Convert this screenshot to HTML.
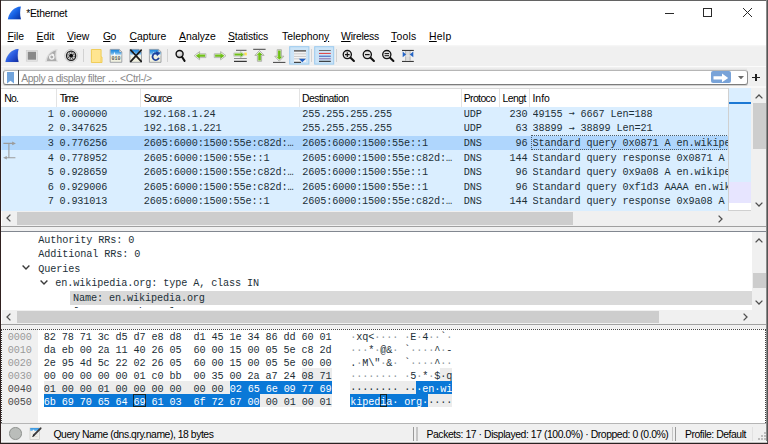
<!DOCTYPE html>
<html><head><meta charset="utf-8"><title>*Ethernet</title>
<style>
html,body{margin:0;padding:0;}
body{width:768px;height:444px;overflow:hidden;background:#fff;position:relative;font-family:"Liberation Sans",sans-serif;font-size:10px;color:#000;}
div,span,svg{position:absolute;white-space:pre;}
.ui{font-family:"Liberation Sans",sans-serif;font-size:10px;color:#000;line-height:14px;}
.ui u{text-decoration:underline;text-decoration-thickness:1px;text-underline-offset:1px;}
.mono{font-family:"Liberation Mono","DejaVu Sans Mono",monospace;font-size:10.2px;letter-spacing:-0.12px;line-height:14.5px;color:#1c3038;}
.row{left:0;width:726px;height:14.5px;}
.row.dn span{top:2.1px;}
.row span{top:1.1px;height:14.5px;overflow:hidden;}
.ar{font-family:"DejaVu Sans Mono",monospace;font-weight:normal;font-size:10px;letter-spacing:0;display:inline-block;position:static;width:6px;text-align:center;line-height:10px;vertical-align:0.5px;margin-right:-0.12px;}
.hsep{top:0;width:1px;height:18px;background:#e3e3e3;}
.brow{left:0;height:13px;line-height:13px;width:765px;}
.brow span{top:1.9px;line-height:13px;}
.brow i{font-style:normal;color:#8e9aa0;position:static;}
.brow div{top:0;height:13px;}
</style></head><body>

<div id="title" style="left:0;top:0;width:768px;height:26px;background:#fff;">
<svg style="left:7px;top:5px" width="16" height="16" viewBox="0 0 16 16"><defs><linearGradient id="fin" x1="0.1" y1="0.1" x2="0.95" y2="0.9"><stop offset="0" stop-color="#4f93f6"/><stop offset="0.5" stop-color="#1763e6"/><stop offset="1" stop-color="#0a37a8"/></linearGradient></defs><path d="M0.9 14.3 C1.6 9.5 5 3.6 11.3 1.7 L13.9 1.5 C13 5.5 12.7 10 14 14.3 Z" fill="url(#fin)"/><path d="M0.9 14.3 H14" stroke="#7fa6e8" stroke-width="0.5" opacity="0.7"/></svg>
<span class="ui" style="left:26.20px;top:7.30px;font-size:10.4px;letter-spacing:-0.270px;color:#000;">*Ethernet</span>
<div style="left:664.7px;top:12.7px;width:9.2px;height:1px;background:#2a2a2a;"></div>
<div style="left:703.2px;top:8.2px;width:9.2px;height:9.2px;border:1px solid #2a2a2a;box-sizing:border-box;"></div>
<svg style="left:742.2px;top:7.4px" width="11" height="11" viewBox="0 0 11 11"><path d="M1 1 L10 10 M10 1 L1 10" stroke="#2a2a2a" stroke-width="1" fill="none"/></svg>
</div>
<div id="menu" style="left:0;top:26px;width:768px;height:20px;background:#fff;">
<span class="ui" style="left:7.50px;top:3.60px;font-size:10.4px;letter-spacing:-0.102px;color:#000;"><u>F</u>ile</span>
<span class="ui" style="left:36.50px;top:3.60px;font-size:10.4px;letter-spacing:0.010px;color:#000;"><u>E</u>dit</span>
<span class="ui" style="left:67.10px;top:3.60px;font-size:10.4px;letter-spacing:-0.051px;color:#000;"><u>V</u>iew</span>
<span class="ui" style="left:103.10px;top:3.60px;font-size:10.4px;letter-spacing:-0.673px;color:#000;"><u>G</u>o</span>
<span class="ui" style="left:129.50px;top:3.60px;font-size:10.4px;letter-spacing:-0.049px;color:#000;"><u>C</u>apture</span>
<span class="ui" style="left:179.10px;top:3.60px;font-size:10.4px;letter-spacing:-0.066px;color:#000;"><u>A</u>nalyze</span>
<span class="ui" style="left:228.00px;top:3.60px;font-size:10.4px;letter-spacing:-0.157px;color:#000;"><u>S</u>tatistics</span>
<span class="ui" style="left:282.00px;top:3.60px;font-size:10.4px;letter-spacing:-0.026px;color:#000;">Telephon<u>y</u></span>
<span class="ui" style="left:341.10px;top:3.60px;font-size:10.4px;letter-spacing:-0.238px;color:#000;"><u>W</u>ireless</span>
<span class="ui" style="left:391.00px;top:3.60px;font-size:10.4px;letter-spacing:0.231px;color:#000;"><u>T</u>ools</span>
<span class="ui" style="left:429.00px;top:3.60px;font-size:10.4px;letter-spacing:0.271px;color:#000;"><u>H</u>elp</span>
</div>
<div id="tb" style="left:1px;top:45.4px;width:766px;height:20.6px;background:linear-gradient(#f8f8f8,#f0f0f0 2px);"></div>
<svg style="left:0;top:44px" width="430" height="24" viewBox="0 44 430 24"><defs><linearGradient id="finb" x1="0.1" y1="0.1" x2="0.95" y2="0.9"><stop offset="0" stop-color="#5a8ff2"/><stop offset="0.5" stop-color="#2a5be0"/><stop offset="1" stop-color="#1633a8"/></linearGradient><linearGradient id="sky" x1="0" y1="0" x2="0" y2="1"><stop offset="0" stop-color="#1c84dc"/><stop offset="0.55" stop-color="#56a9e8"/><stop offset="1" stop-color="#e8f3fb"/></linearGradient><linearGradient id="grn" x1="0" y1="0" x2="0" y2="1"><stop offset="0" stop-color="#8fd630"/><stop offset="1" stop-color="#4fa800"/></linearGradient><linearGradient id="grnh" x1="0" y1="0" x2="1" y2="0"><stop offset="0" stop-color="#8fd630"/><stop offset="1" stop-color="#4fa800"/></linearGradient><radialGradient id="glass" cx="0.4" cy="0.35" r="0.7"><stop offset="0" stop-color="#f4f4f4"/><stop offset="1" stop-color="#b8b8b8"/></radialGradient></defs><g transform="translate(4.6,47.6)"><path d="M0.5 14.6 C1.2 9.3 4.8 3.2 11.2 1.3 L14.3 1.1 C13.4 5.5 13.1 10 14.5 14.6 Z" fill="#d4d8e2"/><path d="M0.9 14.3 C1.6 9.5 5 3.6 11.3 1.7 L13.9 1.5 C13 5.5 12.7 10 14 14.3 Z" fill="url(#finb)"/></g><rect x="26.3" y="50.4" width="11" height="10.8" fill="#e4e4e4" stroke="#cfcfcf" stroke-width="0.7"/><rect x="27.8" y="51.8" width="8.2" height="7.9" fill="#898989"/><path d="M45.2 62 C46 55.5 50 50.2 57.7 49.1 C55.9 53 56.1 57.8 58 62 Z" fill="#dedede"/><path d="M46.9 60.9 C47.7 56 50.6 51.8 56 50.6 C54.8 54 55 57.6 56.5 60.9 Z" fill="#ababab"/><circle cx="51.8" cy="57" r="2.1" fill="none" stroke="#f4f4f4" stroke-width="1.3"/><path d="M51.6 53.2 L54.4 54.6 L52 56.2 Z" fill="#f4f4f4"/><circle cx="71.1" cy="55.7" r="6.4" fill="#e9e9e9" stroke="#c2c2c2" stroke-width="0.8"/><circle cx="71.1" cy="55.7" r="4.6" fill="#dcdcdc" stroke="#1c1c1c" stroke-width="1.25"/><circle cx="71.1" cy="55.7" r="3.1" fill="none" stroke="#4a4a4a" stroke-width="1.2" stroke-dasharray="1.3 1.1"/><circle cx="71.1" cy="55.7" r="2" fill="#0c0c0c"/><rect x="83.0" y="49" width="1" height="13" fill="#d2d2d2"/><rect x="167.0" y="49" width="1" height="13" fill="#d2d2d2"/><rect x="311.0" y="49" width="1" height="13" fill="#d2d2d2"/><rect x="336.0" y="49" width="1" height="13" fill="#d2d2d2"/><path d="M91.4 49.5 H101.1 V57 H102 V62.5 H91.4 Z" fill="#ffe590" stroke="#eec94e" stroke-width="0.9"/><path d="M100.7 57.3 V62" stroke="#f2cf5c" stroke-width="0.6" fill="none"/><path d="M110.2 49.4 H119.4 L121.8 51.9 V62.3 H110.2 Z" fill="#f1f1e0" stroke="#8d9198" stroke-width="0.8"/><path d="M110.6 49.8 H119.2 L121.4 52.1 V55.6 H110.6 Z" fill="url(#sky)"/><path d="M112.6 55.6 L113.8 54.6 L114.5 51.4 L115.2 54.6 L116.6 55.6 Z" fill="#fbfdff"/><path d="M119.4 49.6 V51.9 H121.8 Z" fill="#fdfdfd" stroke="#8d9198" stroke-width="0.5"/><path d="M129.9 49.4 H139.1 L141.5 51.9 V62.3 H129.9 Z" fill="#f1f1e0" stroke="#8d9198" stroke-width="0.8"/><path d="M130.3 49.8 H138.9 L141.1 52.1 V55.6 H130.3 Z" fill="url(#sky)"/><path d="M132.3 55.6 L133.5 54.6 L134.2 51.4 L134.9 54.6 L136.3 55.6 Z" fill="#fbfdff"/><path d="M139.1 49.6 V51.9 H141.5 Z" fill="#fdfdfd" stroke="#8d9198" stroke-width="0.5"/><path d="M149.4 49.4 H158.6 L161.0 51.9 V62.3 H149.4 Z" fill="#f1f1e0" stroke="#8d9198" stroke-width="0.8"/><path d="M149.8 49.8 H158.4 L160.6 52.1 V55.6 H149.8 Z" fill="url(#sky)"/><path d="M151.8 55.6 L153.0 54.6 L153.7 51.4 L154.4 54.6 L155.8 55.6 Z" fill="#fbfdff"/><path d="M158.6 49.6 V51.9 H161.0 Z" fill="#fdfdfd" stroke="#8d9198" stroke-width="0.5"/><text x="111.5" y="60.4" font-family="Liberation Mono, monospace" font-size="4.8" font-weight="bold" fill="#5a5a5a" textLength="9" lengthAdjust="spacingAndGlyphs">010</text><path d="M130.8 50.1 L141.2 61.4 M141.2 50.1 L130.8 61.4" stroke="#1a1a1a" stroke-width="1.7" stroke-linecap="round" fill="none"/><path d="M157.9 54.2 A3.3 3.3 0 1 0 158.9 57.8" fill="none" stroke="#1d3f98" stroke-width="1.8"/><path d="M155.9 51.2 L160.2 53 L157 56.2 Z" fill="#1d3f98"/><circle cx="179.6" cy="54" r="3.5" fill="url(#glass)" stroke="#111" stroke-width="1.4"/><path d="M182 56.9 L184.6 60.9" stroke="#111" stroke-width="2" stroke-linecap="round" fill="none"/><path d="M194.2 55.7 L199.6 51.6 V53.8 H205.9 V57.6 H199.6 V59.8 Z" fill="#f3f4f1" stroke="#aeb2a8" stroke-width="0.9"/><path d="M195.8 55.7 L199.7 52.9 V54.6 H205.1 V56.8 H199.7 V58.5 Z" fill="url(#grn)"/><path d="M226 55.7 L220.6 51.6 V53.8 H214.3 V57.6 H220.6 V59.8 Z" fill="#f3f4f1" stroke="#aeb2a8" stroke-width="0.9"/><path d="M224.4 55.7 L220.5 52.9 V54.6 H215.1 V56.8 H220.5 V58.5 Z" fill="url(#grn)"/><rect x="236" y="49.8" width="10.5" height="1" fill="#555"/><rect x="244.2" y="52.6" width="2.6" height="2.8" fill="#ffe14d"/><path d="M244.8 54.6 L240.4 51.3 V53 H233.8 V56.2 H240.4 V57.9 Z" fill="#f3f4f1" stroke="#b4b8b0" stroke-width="0.7"/><path d="M243.8 54.6 L240.7 52.2 V53.6 H234.5 V55.6 H240.7 V57 Z" fill="url(#grn)"/><rect x="234" y="58" width="12.8" height="1" fill="#8a8a8a"/><rect x="234" y="60.8" width="12.8" height="1.1" fill="#222"/><rect x="253.2" y="48.8" width="12.4" height="1" fill="#444"/><path d="M259.5 50.5 L264.1 55.4 H261.6 V61.3 H257.4 V55.4 H254.9 Z" fill="#f3f4f1" stroke="#a8aca2" stroke-width="0.9"/><path d="M259.5 51.9 L262.4 54.9 H260.8 V60.5 H258.2 V54.9 H256.6 Z" fill="url(#grnh)"/><path d="M279.3 61.2 L283.9 56.2 H281.4 V49.7 H277.2 V56.2 H274.7 Z" fill="#f3f4f1" stroke="#a8aca2" stroke-width="0.9"/><path d="M279.3 59.8 L282.2 56.7 H280.6 V50.5 H278 V56.7 H276.4 Z" fill="url(#grnh)"/><rect x="273" y="61.9" width="12.4" height="1" fill="#444"/><rect x="289.7" y="46.7" width="19.2" height="17.4" fill="#cce4f7" stroke="#9bcaef" stroke-width="1"/><rect x="294" y="50" width="12" height="12" fill="#f4f4f4"/><rect x="294" y="50" width="12" height="1.7" fill="#6c6c6c"/><rect x="294" y="53.4" width="12" height="0.9" fill="#c4c4c4"/><rect x="294" y="55.9" width="12" height="0.9" fill="#c4c4c4"/><rect x="294" y="58.4" width="12" height="0.9" fill="#c4c4c4"/><path d="M298.8 58.8 H305.9 L302.3 62.2 Z" fill="#1f5fc4"/><rect x="294" y="61.8" width="7" height="1.1" fill="#333"/><rect x="314.7" y="46.7" width="19" height="17.4" fill="#cce4f7" stroke="#9bcaef" stroke-width="1"/><rect x="319" y="50.0" width="11.8" height="1" fill="#6c6c6c"/><rect x="319" y="52.9" width="11.8" height="1" fill="#e23a3a"/><rect x="319" y="55.7" width="11.8" height="1" fill="#3456b4"/><rect x="319" y="58.3" width="11.8" height="1" fill="#8a6aa8"/><rect x="319" y="60.8" width="11.8" height="1" fill="#1c1c1c"/><circle cx="347.3" cy="54.6" r="4.1" fill="#e2e2e2" stroke="#111" stroke-width="1.3"/><path d="M350.6 57.8 L353.9 61" stroke="#111" stroke-width="2.1" stroke-linecap="round" fill="none"/><path d="M345.0 54.6 H349.6 M347.3 52.3 V56.9" stroke="#111" stroke-width="1.1" fill="none"/><circle cx="367.3" cy="54.6" r="4.1" fill="#e2e2e2" stroke="#111" stroke-width="1.3"/><path d="M370.6 57.8 L373.9 61" stroke="#111" stroke-width="2.1" stroke-linecap="round" fill="none"/><path d="M365.0 54.6 H369.6" stroke="#111" stroke-width="1.2" fill="none"/><circle cx="386.8" cy="54.6" r="4.1" fill="#e2e2e2" stroke="#111" stroke-width="1.3"/><path d="M390.1 57.8 L393.4 61" stroke="#111" stroke-width="2.1" stroke-linecap="round" fill="none"/><path d="M384.6 53.6 H389.0 M384.6 55.7 H389.0" stroke="#111" stroke-width="1" fill="none"/><rect x="402" y="49.9" width="11.8" height="1.1" fill="#3a3a3a"/><rect x="402" y="60.9" width="11.8" height="1.1" fill="#3a3a3a"/><rect x="405.2" y="51" width="5.2" height="9.9" fill="#dcdcdc"/><rect x="405.2" y="51" width="0.9" height="9.9" fill="#b4b4b4"/><rect x="409.6" y="51" width="0.9" height="9.9" fill="#b4b4b4"/><rect x="402.6" y="55.6" width="10.6" height="0.7" fill="#efefef"/><path d="M402.7 51.5 L406.1 54.4 L402.7 57.3 Z" fill="#2565c6"/><path d="M413.3 51.5 L409.8 54.4 L413.3 57.3 Z" fill="#2565c6"/></svg>
<div style="left:1px;top:65.7px;width:766px;height:4px;background:#f0f0f0;"></div>
<div style="left:1px;top:65.7px;width:766px;height:1.6px;background:#fbfbfb;"></div>
<div style="left:4px;top:67.5px;width:743px;height:2.2px;background:linear-gradient(#f0f0f0,#dedede);"></div>
<div id="fb" style="left:1px;top:67px;width:766px;height:21px;">
<div style="left:0;top:2.5px;width:766px;height:18.5px;background:#f0f0f0;"></div>
<div style="left:2px;top:2.7px;width:745px;height:15.8px;box-sizing:border-box;border:1px solid #8e8e8e;border-top-color:#b6b6b6;border-bottom-color:#7c7c7c;border-radius:3px;background:#fff;box-shadow:0 1.2px 0 #d2d2d2;"></div>
<svg style="left:5.8px;top:4.6px" width="7" height="12" viewBox="0 0 7 12"><path d="M0 0 H7 V11.6 L3.5 8.8 L0 11.6 Z" fill="#72a4dc"/></svg>
<div style="left:17px;top:3px;width:1px;height:15px;background:#4a4a4a;"></div>
<span class="ui" style="left:20.20px;top:5.00px;font-size:10.4px;letter-spacing:-0.386px;color:#8a8a8a;">Apply a display filter … &lt;Ctrl-/&gt;</span>
<div style="left:709.5px;top:4.4px;width:20.3px;height:11.8px;background:#79a3d8;border-radius:2px;"></div>
<svg style="left:712px;top:5.5px" width="16" height="10" viewBox="0 0 16 10"><path d="M0.5 3.2 H9 V0.6 L15.2 4.9 L9 9.2 V6.6 H0.5 Z" fill="#fff"/></svg>
<svg style="left:737px;top:8.6px" width="6" height="3.4" viewBox="0 0 6 3.4"><path d="M0 0 H6 L3 3.4 Z" fill="#6a6a6a"/></svg>
<div style="left:751px;top:9.5px;width:7.6px;height:1.6px;background:#222;"></div><div style="left:754px;top:6.5px;width:1.6px;height:7.6px;background:#222;"></div>
</div>
<div style="left:1px;top:86.4px;width:766px;height:1.3px;background:#f8f8f8;"></div>
<div style="left:1px;top:87.7px;width:766px;height:1.3px;background:#d8d8d8;"></div>
<div id="hdr" style="left:2px;top:88.5px;width:726px;height:18px;background:#fff;">
<span class="ui" style="left:2.20px;top:3.50px;font-size:10.4px;letter-spacing:-0.792px;color:#000;">No.</span>
<span class="ui" style="left:57.80px;top:3.50px;font-size:10.4px;letter-spacing:-1.241px;color:#000;">Time</span>
<span class="ui" style="left:141.70px;top:3.50px;font-size:10.4px;letter-spacing:-0.890px;color:#000;">Source</span>
<span class="ui" style="left:300.00px;top:3.50px;font-size:10.4px;letter-spacing:-0.503px;color:#000;">Destination</span>
<span class="ui" style="left:461.70px;top:3.50px;font-size:10.4px;letter-spacing:-0.590px;color:#000;">Protoco</span>
<span class="ui" style="left:500.50px;top:3.50px;font-size:10.4px;letter-spacing:-0.506px;color:#000;">Lengt</span>
<span class="ui" style="left:530.50px;top:3.50px;font-size:10.4px;letter-spacing:-0.015px;color:#000;">Info</span>
<div class="hsep" style="left:54.0px"></div>
<div class="hsep" style="left:138.0px"></div>
<div class="hsep" style="left:297.0px"></div>
<div class="hsep" style="left:458.5px"></div>
<div class="hsep" style="left:497.0px"></div>
<div class="hsep" style="left:527.0px"></div>
</div>
<div id="plist" style="left:2px;top:106.5px;width:726px;height:104.5px;background:#daeeff;overflow:hidden;">
<div class="row mono" style="top:0.0px;background:#daeeff;">
<span style="left:0;width:51.7px;text-align:right;">1</span>
<span style="left:57.4px;width:80px;">0.000000</span>
<span style="left:141.7px;width:152px;">192.168.1.24</span>
<span style="left:300.2px;width:156px;">255.255.255.255</span>
<span style="left:461.8px;width:36px;">UDP</span>
<span style="left:480px;width:45.6px;text-align:right;">230</span>
<span style="left:530.6px;width:196px;">49155 <b class="ar">→</b> 6667 Len=188</span>
</div>
<div class="row mono" style="top:14.5px;background:#daeeff;">
<span style="left:0;width:51.7px;text-align:right;">2</span>
<span style="left:57.4px;width:80px;">0.347625</span>
<span style="left:141.7px;width:152px;">192.168.1.221</span>
<span style="left:300.2px;width:156px;">255.255.255.255</span>
<span style="left:461.8px;width:36px;">UDP</span>
<span style="left:480px;width:45.6px;text-align:right;">63</span>
<span style="left:530.6px;width:196px;">38899 <b class="ar">→</b> 38899 Len=21</span>
</div>
<div class="row mono" style="top:29.0px;background:#afd6fd;">
<span style="left:0;width:51.7px;text-align:right;">3</span>
<span style="left:57.4px;width:80px;">0.776256</span>
<span style="left:141.7px;width:152px;">2605:6000:1500:55e:c82d:…</span>
<span style="left:300.2px;width:156px;">2605:6000:1500:55e::1</span>
<span style="left:461.8px;width:36px;">DNS</span>
<span style="left:480px;width:45.6px;text-align:right;">96</span>
<span style="left:530.6px;width:196px;">Standard query 0x0871 A en.wikipedia.org</span>
</div>
<div class="row mono dn" style="top:43.5px;background:#daeeff;">
<span style="left:0;width:51.7px;text-align:right;">4</span>
<span style="left:57.4px;width:80px;">0.778952</span>
<span style="left:141.7px;width:152px;">2605:6000:1500:55e::1</span>
<span style="left:300.2px;width:156px;">2605:6000:1500:55e:c82d:…</span>
<span style="left:461.8px;width:36px;">DNS</span>
<span style="left:480px;width:45.6px;text-align:right;">144</span>
<span style="left:530.6px;width:196px;">Standard query response 0x0871 A en.wikipedia.org</span>
</div>
<div class="row mono" style="top:58.0px;background:#daeeff;">
<span style="left:0;width:51.7px;text-align:right;">5</span>
<span style="left:57.4px;width:80px;">0.928659</span>
<span style="left:141.7px;width:152px;">2605:6000:1500:55e:c82d:…</span>
<span style="left:300.2px;width:156px;">2605:6000:1500:55e::1</span>
<span style="left:461.8px;width:36px;">DNS</span>
<span style="left:480px;width:45.6px;text-align:right;">96</span>
<span style="left:530.6px;width:196px;">Standard query 0x9a08 A en.wikipedia.org</span>
</div>
<div class="row mono dn" style="top:72.5px;background:#daeeff;">
<span style="left:0;width:51.7px;text-align:right;">6</span>
<span style="left:57.4px;width:80px;">0.929006</span>
<span style="left:141.7px;width:152px;">2605:6000:1500:55e:c82d:…</span>
<span style="left:300.2px;width:156px;">2605:6000:1500:55e::1</span>
<span style="left:461.8px;width:36px;">DNS</span>
<span style="left:480px;width:45.6px;text-align:right;">96</span>
<span style="left:530.6px;width:196px;">Standard query 0xf1d3 AAAA en.wikipedia.org</span>
</div>
<div class="row mono" style="top:87.0px;background:#daeeff;">
<span style="left:0;width:51.7px;text-align:right;">7</span>
<span style="left:57.4px;width:80px;">0.931013</span>
<span style="left:141.7px;width:152px;">2605:6000:1500:55e::1</span>
<span style="left:300.2px;width:156px;">2605:6000:1500:55e:c82d:…</span>
<span style="left:461.8px;width:36px;">DNS</span>
<span style="left:480px;width:45.6px;text-align:right;">144</span>
<span style="left:530.6px;width:196px;">Standard query response 0x9a08 A en.wikipedia.org</span>
</div>
<div style="left:528.5px;top:28.8px;width:198px;height:14.4px;box-sizing:border-box;border:1px dotted #4c5c68;"></div>
<svg style="left:0;top:30px" width="18" height="26" viewBox="0 30 18 26"><path d="M1.4 36.4 H11 M6.9 36.4 V50.7 M4 50.7 H13.4" stroke="#9c9c9c" stroke-width="1.1" fill="none"/><path d="M10.2 34.6 L13.9 36.4 L10.2 38.2 Z" fill="#9c9c9c"/><path d="M4.8 48.9 L1.1 50.7 L4.8 52.5 Z" fill="#9c9c9c"/></svg>
</div>
<div style="left:1px;top:106.5px;width:1px;height:104.5px;background:#e4f2ff;"></div>
<div style="left:1px;top:135.5px;width:1px;height:14.5px;background:#c4e0fe;"></div>
<div style="left:728px;top:88px;width:1px;height:123px;background:#d0d0d0;"></div>
<div style="left:729px;top:88px;width:22px;height:123px;background:#daeeff;"></div>
<div style="left:729px;top:102px;width:22.5px;height:2px;background:#1c78d4;"></div>
<div style="left:729px;top:181.8px;width:22.5px;height:21.6px;background:#e7e5ff;"></div>
<div style="left:729px;top:203.4px;width:22.5px;height:7.6px;background:#fff;"></div>
<div style="left:728.5px;top:210.3px;width:23px;height:1px;background:#d0d0d0;"></div>
<div style="left:750.5px;top:88px;width:1px;height:123px;background:#d4d8dc;"></div>
<div style="left:751px;top:88px;width:16px;height:123px;background:#f0f0f0;"></div>
<div style="left:753px;top:103px;width:12.5px;height:46px;background:#cdcdcd;"></div>
<svg style="left:755px;top:94px" width="8" height="5" viewBox="0 0 8 5"><path d="M0.6 4.4 L4 1 L7.4 4.4" stroke="#505050" stroke-width="1.3" fill="none"/></svg>
<svg style="left:755px;top:202px" width="8" height="5" viewBox="0 0 8 5"><path d="M0.6 0.6 L4 4 L7.4 0.6" stroke="#505050" stroke-width="1.3" fill="none"/></svg>
<div style="left:2px;top:211px;width:765px;height:15px;background:#f0f0f0;"></div>
<div style="left:17px;top:212px;width:556px;height:13px;background:#cdcdcd;"></div>
<svg style="left:5.7px;top:214.2px" width="5" height="8" viewBox="0 0 5 8"><path d="M4.4 0.6 L1 4 L4.4 7.4" stroke="#505050" stroke-width="1.3" fill="none"/></svg>
<svg style="left:717.5px;top:214.5px" width="5" height="8" viewBox="0 0 5 8"><path d="M0.6 0.6 L4 4 L0.6 7.4" stroke="#505050" stroke-width="1.3" fill="none"/></svg>
<div style="left:1px;top:226px;width:766px;height:6px;background:#f0f0f0;"></div>
<div style="left:1px;top:226px;width:766px;height:1px;background:#a0a0a0;"></div>
<div style="left:1px;top:231px;width:766px;height:1px;background:#828790;"></div>
<div style="left:2px;top:300px;width:749.5px;height:10px;background:#fff;"></div><div id="det" style="left:2px;top:232px;width:749.5px;height:76.2px;background:#fff;overflow:hidden;">
<span class="mono" style="left:36.3px;top:1.7px;">Authority RRs: 0</span>
<span class="mono" style="left:36.3px;top:16.2px;">Additional RRs: 0</span>
<span class="mono" style="left:36.3px;top:30.7px;">Queries</span>
<span class="mono" style="left:53.3px;top:45.2px;">en.wikipedia.org: type A, class IN</span>
<div style="left:68.3px;top:58.6px;width:700px;height:14.3px;background:#d9d9d9;"></div>
<span class="mono" style="left:71.0px;top:59.7px;">Name: en.wikipedia.org</span>
<span class="mono" style="left:71.0px;top:74.2px;">[Name Length: 16]</span>
<svg style="left:20.4px;top:33.3px" width="8" height="5" viewBox="0 0 8 5"><path d="M0.6 0.6 L4 4 L7.4 0.6" stroke="#3a3a3a" stroke-width="1.4" fill="none"/></svg>
<svg style="left:38px;top:47.7px" width="8" height="5" viewBox="0 0 8 5"><path d="M0.6 0.6 L4 4 L7.4 0.6" stroke="#3a3a3a" stroke-width="1.4" fill="none"/></svg>
</div>
<div style="left:751.5px;top:232px;width:15.5px;height:78px;background:#f0f0f0;"></div>
<div style="left:753px;top:272.5px;width:12.5px;height:15px;background:#cdcdcd;"></div>
<svg style="left:755px;top:237.5px" width="8" height="5" viewBox="0 0 8 5"><path d="M0.6 4.4 L4 1 L7.4 4.4" stroke="#505050" stroke-width="1.3" fill="none"/></svg>
<svg style="left:755px;top:299.5px" width="8" height="5" viewBox="0 0 8 5"><path d="M0.6 0.6 L4 4 L7.4 0.6" stroke="#505050" stroke-width="1.3" fill="none"/></svg>
<div style="left:2px;top:309.6px;width:765px;height:14.4px;background:#f0f0f0;"></div>
<div style="left:17px;top:310.6px;width:642px;height:12.4px;background:#cdcdcd;"></div>
<svg style="left:5.7px;top:312.7px" width="5" height="8" viewBox="0 0 5 8"><path d="M4.4 0.6 L1 4 L4.4 7.4" stroke="#505050" stroke-width="1.3" fill="none"/></svg>
<svg style="left:742.5px;top:312.5px" width="5" height="8" viewBox="0 0 5 8"><path d="M0.6 0.6 L4 4 L0.6 7.4" stroke="#505050" stroke-width="1.3" fill="none"/></svg>
<div style="left:1px;top:324px;width:766px;height:5px;background:#f0f0f0;"></div>
<div style="left:1px;top:324px;width:766px;height:1px;background:#a0a0a0;"></div>
<div id="bytes" style="left:2px;top:329px;width:765px;height:94px;background:#fff;overflow:hidden;">
<div style="left:0;top:0;width:35.5px;height:94px;background:#f0f0f0;"></div>
<div class="brow mono" style="top:-0.3px;">
<span style="left:5.7px;color:#9a9a9a">0000</span>
<span style="left:41.7px;">82 78 71 3c d5 d7 e8 d8  d1 45 1e 34 86 dd 60 01</span>
<span style="left:348.2px;"><i>·</i>xq&lt;<i>·</i><i>·</i><i>·</i><i>·</i> <i>·</i>E<i>·</i>4<i>·</i><i>·</i>`<i>·</i></span>
</div>
<div class="brow mono" style="top:12.7px;">
<span style="left:5.7px;color:#9a9a9a">0010</span>
<span style="left:41.7px;">da eb 00 2a 11 40 26 05  60 00 15 00 05 5e c8 2d</span>
<span style="left:348.2px;"><i>·</i><i>·</i><i>·</i>*<i>·</i>@&amp;<i>·</i> `<i>·</i><i>·</i><i>·</i><i>·</i>^<i>·</i>-</span>
</div>
<div class="brow mono" style="top:25.7px;">
<span style="left:5.7px;color:#9a9a9a">0020</span>
<span style="left:41.7px;">2e 95 4d 5c 22 02 26 05  60 00 15 00 05 5e 00 00</span>
<span style="left:348.2px;">.<i>·</i>M\&quot;<i>·</i>&amp;<i>·</i> `<i>·</i><i>·</i><i>·</i><i>·</i>^<i>·</i><i>·</i></span>
</div>
<div class="brow mono" style="top:38.7px;">
<div style="left:299.7px;width:30px;background:#ececec;"></div>
<div style="left:438.2px;width:12px;background:#ececec;"></div>
<span style="left:5.7px;color:#9a9a9a">0030</span>
<span style="left:41.7px;">00 00 00 00 00 01 c0 bb  00 35 00 2a a7 24 08 71</span>
<span style="left:348.2px;"><i>·</i><i>·</i><i>·</i><i>·</i><i>·</i><i>·</i><i>·</i><i>·</i> <i>·</i>5<i>·</i>*<i>·</i>$</span><span style="left:438.2px;">·q</span>
</div>
<div class="brow mono" style="top:51.7px;">
<div style="left:41.7px;width:186px;background:#ececec;"></div>
<div style="left:227.7px;width:102px;background:#0a78d7;"></div>
<div style="left:348.2px;width:66px;background:#ececec;"></div>
<div style="left:414.2px;width:36px;background:#0a78d7;"></div>
<span style="left:5.7px;color:#4a4a4a">0040</span>
<span style="left:41.7px;">01 00 00 01 00 00 00 00  00 00 </span><span style="left:227.7px;color:#fff;">02 65 6e 09 77 69</span>
<span style="left:348.2px;">········ ··</span><span style="left:414.2px;color:#fff;">·en·wi</span>
</div>
<div class="brow mono" style="top:64.7px;">
<div style="left:41.7px;width:216px;background:#0a78d7;"></div>
<div style="left:257.7px;width:72px;background:#ececec;"></div>
<div style="left:348.2px;width:78px;background:#0a78d7;"></div>
<div style="left:426.2px;width:24px;background:#ececec;"></div>
<div style="left:131.2px;width:13px;box-sizing:border-box;border:1px solid #12272e;"></div>
<div style="left:377.7px;width:7px;box-sizing:border-box;border:1px solid #12272e;"></div>
<span style="left:5.7px;color:#4a4a4a">0050</span>
<span style="left:41.7px;color:#fff;">6b 69 70 65 64 69 61 03  6f 72 67 00</span><span style="left:257.7px;"> 00 01 00 01</span>
<span style="left:348.2px;color:#fff;">kipedia· org·</span><span style="left:426.2px;">····</span>
</div>
</div>
<div style="left:1.3px;top:329px;width:765px;height:94px;box-sizing:border-box;border:1px dotted #444;border-bottom:none;"></div>
<div id="sb" style="left:1px;top:423px;width:766px;height:20px;background:#f0f0f0;">
<div style="left:0;top:0;width:766px;height:1px;background:#b5b5b5;"></div>
<div style="left:8.2px;top:4.2px;width:12.6px;height:12.6px;box-sizing:border-box;border-radius:50%;background:#babdba;border:1px solid #8e918e;"></div>
<svg style="left:27px;top:3px" width="16" height="15" viewBox="28 426 16 15"><defs><linearGradient id="sky2" x1="0" y1="0" x2="0" y2="1"><stop offset="0" stop-color="#1f8ae0"/><stop offset="1" stop-color="#8ccaf2"/></linearGradient></defs><rect x="30" y="428" width="9.4" height="11.3" fill="#f1f1ea" stroke="#c4c4bc" stroke-width="0.6"/><rect x="30.2" y="428.1" width="9" height="2.9" fill="url(#sky2)"/><path d="M32.2 431 L33.6 429.6 L34.6 431 Z" fill="#f6fafd"/><path d="M32 434.2 H37.6 M32 436.6 H37.6" stroke="#cfcfc6" stroke-width="0.6"/><path d="M40.6 428.3 L33.9 435.2" stroke="#3c3c3c" stroke-width="1.9" stroke-linecap="round"/><path d="M33.9 435.2 L32.9 436.3" stroke="#222" stroke-width="1.2" stroke-linecap="round"/></svg>
<span class="ui" style="left:52.50px;top:4.50px;font-size:10.4px;letter-spacing:-0.458px;color:#000;">Query Name (dns.qry.name), 18 bytes</span>
<span class="ui" style="left:425.50px;top:4.50px;font-size:10.4px;letter-spacing:-0.425px;color:#000;">Packets: 17 · Displayed: 17 (100.0%) · Dropped: 0 (0.0%)</span>
<span class="ui" style="left:684.00px;top:4.50px;font-size:10.4px;letter-spacing:-0.447px;color:#000;">Profile: Default</span>
<div style="left:763px;top:15px;width:1.6px;height:1.6px;background:#bdbdbd;"></div>
<div style="left:760px;top:15px;width:1.6px;height:1.6px;background:#bdbdbd;"></div>
<div style="left:757px;top:15px;width:1.6px;height:1.6px;background:#bdbdbd;"></div>
<div style="left:763px;top:12px;width:1.6px;height:1.6px;background:#bdbdbd;"></div>
<div style="left:760px;top:12px;width:1.6px;height:1.6px;background:#bdbdbd;"></div>
<div style="left:763px;top:9px;width:1.6px;height:1.6px;background:#bdbdbd;"></div>
<div style="left:750.5px;top:4px;width:1px;height:14px;background:#e2e2e2;"></div>
<div style="left:412.4px;top:4px;width:1px;height:14px;background:#9a9a9a;"></div>
<div style="left:415.4px;top:4px;width:1.5px;height:14px;background:#c6c6c6;"></div>
<div style="left:670.6px;top:4px;width:1.5px;height:14px;background:#c6c6c6;"></div>
<div style="left:674.0px;top:4px;width:1px;height:14px;background:#9a9a9a;"></div>
</div>
<div style="left:0;top:0;width:768px;height:1px;background:#636363;"></div>
<div style="left:0;top:0;width:1.3px;height:444px;background:#30201f;"></div>
<div style="left:766px;top:0;width:1px;height:444px;background:#8c8c8c;"></div>
<div style="left:767px;top:0;width:1px;height:444px;background:#555;"></div>
<div style="left:1px;top:441px;width:766px;height:1px;background:#f7f7f7;"></div>
<div style="left:1px;top:442px;width:766px;height:1px;background:#c2c0c0;"></div>
<div style="left:0;top:443px;width:768px;height:1px;background:#2b2222;"></div>
</body></html>
